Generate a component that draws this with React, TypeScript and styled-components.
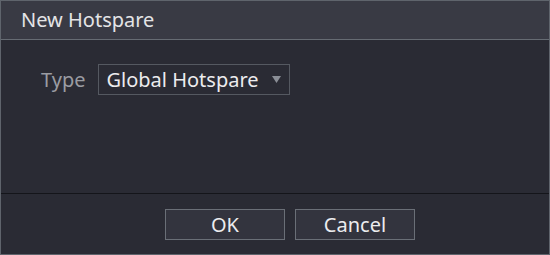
import React from "react";
import styled, { createGlobalStyle } from "styled-components";

const GlobalStyle = createGlobalStyle`
  html, body {
    margin: 0;
    padding: 0;
    background: #2a2b34;
  }
  * {
    box-sizing: border-box;
  }
`;

function App() {
  return (
    <>
      <GlobalStyle />
      <Dialog>
        <Header>New Hotspare</Header>
        <Body>
          <Row>
            <Label>Type</Label>
            <Select>
              <SelectText>Global Hotspare</SelectText>
              <Arrow viewBox="0 0 9 7">
                <path d="M0 0 H9 L4.5 7 Z" fill="#8a8e96" />
              </Arrow>
            </Select>
          </Row>
        </Body>
        <Footer>
          <Button>OK</Button>
          <Button>Cancel</Button>
        </Footer>
      </Dialog>
    </>
  );
}

export default App;

const Dialog = styled.div`
  width: 550px;
  height: 255px;
  border: 1px solid #5f646c;
  background: #2a2b34;
  display: flex;
  flex-direction: column;
  font-family: "Noto Sans", "Open Sans", sans-serif;
`;

const Header = styled.div`
  height: 39px;
  flex-shrink: 0;
  background: #393a44;
  border-bottom: 1px solid #666b73;
  color: #e4e4e6;
  font-size: 20px;
  line-height: 38px;
  padding-left: 20px;
`;

const Body = styled.div`
  height: 154px;
  flex-shrink: 0;
  border-bottom: 1px solid #14151a;
  padding: 24px 0 0 40px;
`;

const Row = styled.div`
  display: flex;
  align-items: center;
  gap: 12px;
`;

const Label = styled.div`
  color: #9a9ca2;
  font-size: 20px;
`;

const Select = styled.div`
  width: 192px;
  height: 31px;
  border: 1px solid #555961;
  display: flex;
  align-items: center;
  justify-content: space-between;
  padding: 0 8px 0 8px;
`;

const SelectText = styled.span`
  color: #ececee;
  font-size: 20px;
  line-height: 1;
`;

const Arrow = styled.svg`
  width: 9px;
  height: 7px;
  display: block;
`;

const Footer = styled.div`
  flex: 1;
  display: flex;
  justify-content: center;
  align-items: flex-start;
  gap: 10px;
  padding: 15px 0 0 30px;
`;

const Button = styled.div`
  width: 120px;
  height: 31px;
  background: #33343e;
  border: 1px solid #6a6f77;
  color: #ececee;
  font-size: 20px;
  display: flex;
  align-items: center;
  justify-content: center;
`;
